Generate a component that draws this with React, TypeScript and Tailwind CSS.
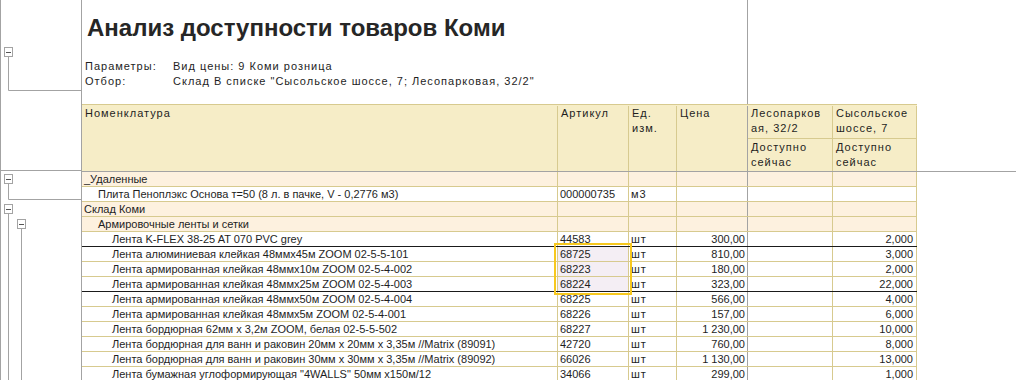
import React from 'react';

type Row = {
  name: string;
  level: number;
  group?: boolean;
  art?: string;
  unit?: string;
  price?: string;
  qty?: string;
  dark?: boolean;
  picked?: boolean;
};

const rows: Row[] = [
  { name: '_Удаленные', level: 0, group: true },
  { name: 'Плита Пеноплэкс Основа т=50 (8 л. в пачке, V - 0,2776 м3)', level: 1, art: '000000735', unit: 'м3' },
  { name: 'Склад Коми', level: 0, group: true },
  { name: 'Армировочные ленты и сетки', level: 1, group: true },
  { name: 'Лента K-FLEX 38-25 AT 070 PVC grey', level: 2, art: '44583', unit: 'шт', price: '300,00', qty: '2,000', dark: true },
  { name: 'Лента алюминиевая клейкая 48ммx45м ZOOM 02-5-5-101', level: 2, art: '68725', unit: 'шт', price: '810,00', qty: '3,000', picked: true },
  { name: 'Лента армированная клейкая 48ммx10м ZOOM 02-5-4-002', level: 2, art: '68223', unit: 'шт', price: '180,00', qty: '2,000', picked: true },
  { name: 'Лента армированная клейкая 48ммx25м ZOOM 02-5-4-003', level: 2, art: '68224', unit: 'шт', price: '323,00', qty: '22,000', picked: true, dark: true },
  { name: 'Лента армированная клейкая 48ммx50м ZOOM 02-5-4-004', level: 2, art: '68225', unit: 'шт', price: '566,00', qty: '4,000' },
  { name: 'Лента армированная клейкая 48ммx5м ZOOM 02-5-4-001', level: 2, art: '68226', unit: 'шт', price: '157,00', qty: '6,000' },
  { name: 'Лента бордюрная 62мм х 3,2м ZOOM, белая 02-5-5-502', level: 2, art: '68227', unit: 'шт', price: '1 230,00', qty: '10,000' },
  { name: 'Лента бордюрная для ванн и раковин 20мм х 20мм х 3,35м //Matrix (89091)', level: 2, art: '42720', unit: 'шт', price: '760,00', qty: '8,000' },
  { name: 'Лента бордюрная для ванн и раковин 30мм х 30мм х 3,35м //Matrix (89092)', level: 2, art: '66026', unit: 'шт', price: '1 130,00', qty: '13,000' },
  { name: 'Лента бумажная углоформирующая "4WALLS" 50мм х150м/12', level: 2, art: '34066', unit: 'шт', price: '299,00', qty: '1,000' },
];

const indent = ['pl-[2px]', 'pl-[16px]', 'pl-[30px]'];

// grouping brackets on the left margin
const Outline = () => {
  const c = '#a3a3a3';
  const box = (x: number, y: number) => (
    <g>
      <rect x={x + 0.5} y={y + 0.5} width={8} height={9} fill="#fff" stroke={c} />
      <line x1={x + 2} y1={y + 5.5} x2={x + 7} y2={y + 5.5} stroke="#555" />
    </g>
  );
  return (
    <svg width="81" height="380" className="shrink-0 block">
      <line x1="0.5" y1="0" x2="0.5" y2="380" stroke={c} />
      <line x1="0" y1="170.5" x2="81" y2="170.5" stroke={c} />
      <polyline points="8.5,56 8.5,90.5 81,90.5" fill="none" stroke={c} />
      {box(4, 47)}
      <polyline points="8.5,183 8.5,199.5 81,199.5" fill="none" stroke={c} />
      {box(4, 174)}
      <line x1="8.5" y1="213" x2="8.5" y2="380" stroke={c} />
      {box(4, 204)}
      <line x1="21.5" y1="228" x2="21.5" y2="380" stroke={c} />
      {box(17, 219)}
    </svg>
  );
};

const cols = 'grid grid-cols-[476px_71px_48px_71px_85px_84px] w-[835px]';

export default function App() {
  return (
    <div className="flex w-[1016px] h-[380px] overflow-hidden bg-white text-[#1e1e1e] font-['Liberation_Sans',Arial,sans-serif]">
      <Outline />
      <div className="w-[935px] shrink-0 border-l border-[#a3a3a3]">
        {/* report title and parameters */}
        <div className="h-[104px] w-[666px] border-r border-[#a3a3a3]">
          <div className="pt-[14px] pl-[5px] text-[24px] font-bold leading-[28px] text-[#262626] whitespace-nowrap">
            Анализ доступности товаров Коми
          </div>
          <div className="mt-[17px] grid grid-cols-[88px_1fr] pl-[3px] text-[11px] leading-[15px] tracking-[1px] whitespace-nowrap">
            <span>Параметры:</span>
            <span>Вид цены: 9 Коми розница</span>
            <span>Отбор:</span>
            <span>Склад В списке "Сысольское шоссе, 7; Лесопарковая, 32/2"</span>
          </div>
        </div>

        {/* table header */}
        <div className="border-b border-[#a3a3a3]">
          <div className={`${cols} grid-rows-[33px_32px] border-t border-[#d7ca8f] bg-[#f6edc7] text-[11px] leading-[15px] tracking-[1px] pt-px`}>
            <div className="row-span-2 border-r border-[#d7ca8f] pl-[3px]">Номенклатура</div>
            <div className="row-span-2 border-r border-[#d7ca8f] pl-[3px]">Артикул</div>
            <div className="row-span-2 border-r border-[#d7ca8f] pl-[3px]">Ед.<br />изм.</div>
            <div className="row-span-2 border-r border-[#a3a3a3] pl-[3px]">Цена</div>
            <div className="border-r border-b border-[#d7ca8f] pl-[3px]">Лесопарков<br />ая, 32/2</div>
            <div className="border-r border-b border-[#d7ca8f] pl-[3px]">Сысольское<br />шоссе, 7</div>
            <div className="border-r border-[#d7ca8f] pl-[3px] pt-px">Доступно<br />сейчас</div>
            <div className="border-r border-[#d7ca8f] pl-[3px] pt-px">Доступно<br />сейчас</div>
          </div>
        </div>

        {/* table body */}
        <div className="relative text-[11px] leading-[14px]">
          {rows.map((r, i) => (
            <div
              key={i}
              className={`${cols} h-[15px] border-b ${r.dark ? 'border-[#1a1a1a]' : 'border-[#d7ca8f]'} ${r.group ? 'bg-[#fdf1df]' : 'bg-white'}`}
            >
              <div className={`border-r border-[#d7ca8f] whitespace-nowrap overflow-hidden ${indent[r.level]}`}>{r.name}</div>
              <div className={`border-r border-[#d7ca8f] pl-[2px] ${r.picked ? 'bg-[#f4eef4]' : ''}`}>{r.art}</div>
              <div className="border-r border-[#d7ca8f] pl-[2px] tracking-[1px]">{r.unit}</div>
              <div className="border-r border-[#a3a3a3] pr-[2px] text-right whitespace-nowrap">{r.price}</div>
              <div className="border-r border-[#d7ca8f]"></div>
              <div className="border-r border-[#d7ca8f] pr-[3px] text-right">{r.qty}</div>
            </div>
          ))}
          {/* current cell selection */}
          <div className="absolute left-[472px] top-[71px] w-[78px] h-[52px] border-2 border-[#f7c81e] pointer-events-none" />
        </div>
      </div>
    </div>
  );
}
